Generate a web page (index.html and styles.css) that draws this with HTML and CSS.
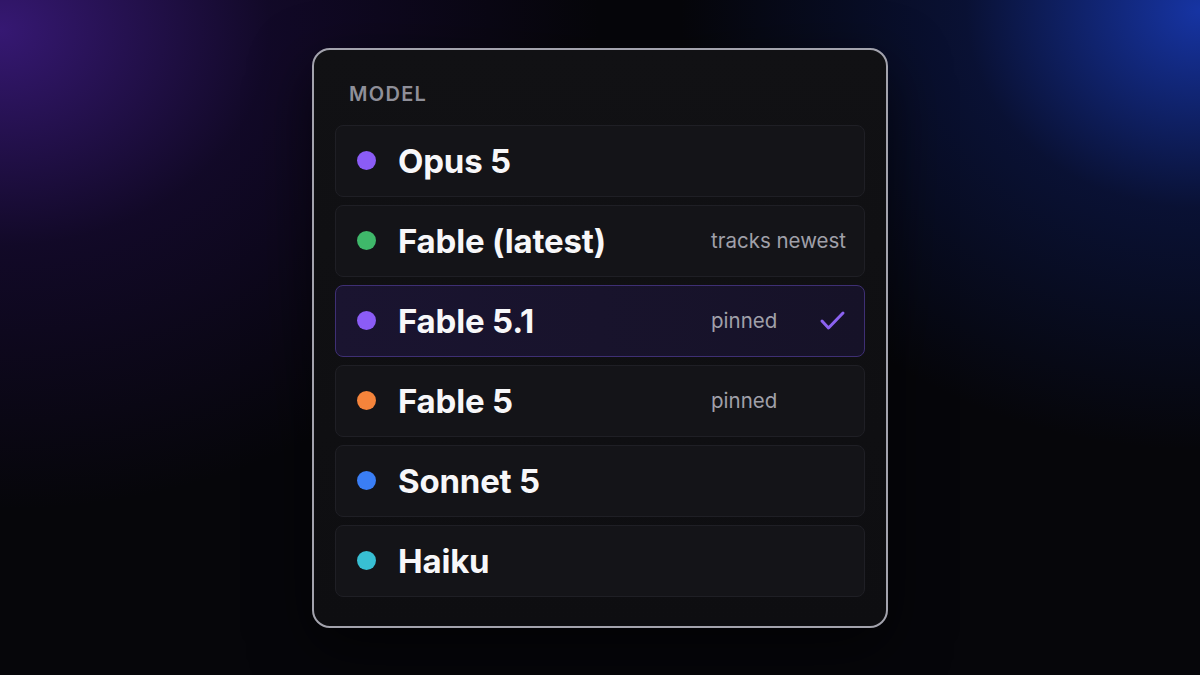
FILE: index.html
```html
<!DOCTYPE html>
<html lang="en">
<head>
<meta charset="utf-8">
<title>Model picker</title>
<link rel="stylesheet" href="styles.css">
</head>
<body>
<div class="stage">
  <div class="card">
    <div class="label">MODEL</div>
    <ul class="list">
      <li class="row">
        <span class="dot dot-purple"></span>
        <span class="name">Opus 5</span>
        <span class="meta"></span>
      </li>
      <li class="row">
        <span class="dot dot-green"></span>
        <span class="name">Fable (latest)</span>
        <span class="meta"><span class="meta-text">tracks newest</span></span>
      </li>
      <li class="row selected">
        <span class="dot dot-purple"></span>
        <span class="name">Fable 5.1</span>
        <span class="meta"><span class="meta-text">pinned</span>
          <svg class="check" width="28" height="22" viewBox="0 0 28 22"><polyline points="3,11 9.5,18 24,3" fill="none" stroke="#8b62f0" stroke-width="3" stroke-linecap="round" stroke-linejoin="round"/></svg>
        </span>
      </li>
      <li class="row">
        <span class="dot dot-orange"></span>
        <span class="name">Fable 5</span>
        <span class="meta"><span class="meta-text">pinned</span></span>
      </li>
      <li class="row">
        <span class="dot dot-blue"></span>
        <span class="name">Sonnet 5</span>
        <span class="meta"></span>
      </li>
      <li class="row">
        <span class="dot dot-cyan"></span>
        <span class="name">Haiku</span>
        <span class="meta"></span>
      </li>
    </ul>
  </div>
</div>
</body>
</html>
```
FILE: styles.css
```css
html, body {
  margin: 0;
  padding: 0;
}
body {
  width: 1200px;
  height: 675px;
  overflow: hidden;
  background-color: #06060a;
  background-image:
    radial-gradient(ellipse 600px 480px at 0px 30px, rgba(70, 30, 150, 0.75), rgba(40, 15, 95, 0.35) 45%, rgba(6, 6, 10, 0) 100%),
    radial-gradient(ellipse 520px 440px at 1200px 10px, rgba(25, 60, 190, 0.85), rgba(15, 35, 120, 0.38) 45%, rgba(6, 6, 10, 0) 100%);
  font-family: "Inter", "Noto Sans", sans-serif;
}
.stage {
  width: 1200px;
  height: 675px;
  display: flex;
  align-items: center;
  justify-content: center;
}
.card {
  width: 530px;
  box-sizing: content-box;
  padding: 32px 21px 29px 21px;
  border: 2px solid #a3a3ad;
  border-radius: 18px;
  background: linear-gradient(180deg, #111114 0%, #0e0e11 100%);
  box-shadow: 0 20px 60px rgba(0, 0, 0, 0.6);
}
.label {
  height: 24px;
  line-height: 24px;
  font-size: 20px;
  font-weight: 600;
  letter-spacing: 1.3px;
  color: #8f8f99;
  padding-left: 14px;
  margin-bottom: 19px;
}
.list {
  list-style: none;
  margin: 0;
  padding: 0;
  display: flex;
  flex-direction: column;
  gap: 8px;
}
.row {
  height: 72px;
  box-sizing: border-box;
  display: flex;
  align-items: center;
  gap: 22px;
  padding: 0 17px 0 21px;
  background: #141418;
  border: 1px solid #1f1f25;
  border-radius: 8px;
}
.row.selected {
  background: linear-gradient(90deg, #1a1430 0%, #161228 100%);
  border-color: #3e2f74;
}
.dot {
  width: 19px;
  height: 19px;
  border-radius: 50%;
  flex: none;
}
.dot-purple { background: #8b5cf6; }
.dot-green { background: #3fb86a; }
.dot-orange { background: #f5843b; }
.dot-blue { background: #3a7ef5; }
.dot-cyan { background: #38bfd3; }
.name {
  flex: 1;
  font-size: 33px;
  font-weight: 700;
  color: #f7f7f9;
  letter-spacing: -0.2px;
}
.meta {
  width: 136px;
  flex: none;
  display: flex;
  align-items: center;
  justify-content: space-between;
}
.meta-text {
  font-size: 20.5px;
  color: #a0a0a9;
  white-space: nowrap;
}
.check {
  display: block;
}
```
